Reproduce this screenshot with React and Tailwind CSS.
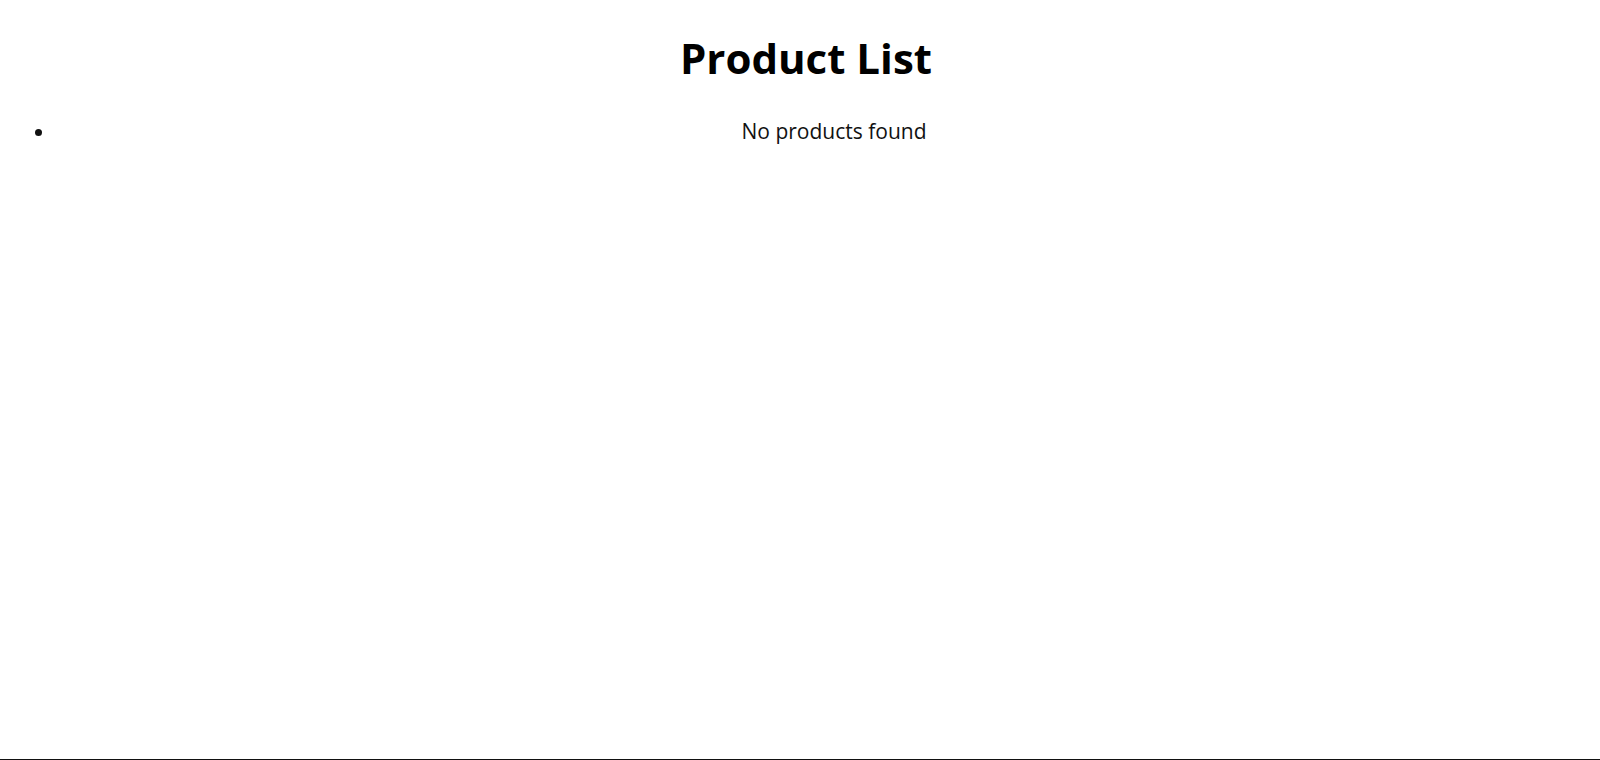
export default function App() {
  const products = [];

  return (
    <div className="min-h-[760px] border-b border-[#111] bg-white font-['Segoe_UI','Open_Sans',sans-serif] text-black">
      <h1 className="pt-[30px] pl-[12px] text-center text-[42px] font-bold leading-[56px]">Product List</h1>
      <ul className="mt-[31px] list-disc pl-[56px]">
        {products.length === 0 && (
          <li className="pl-[12px] text-center text-[21px] leading-[28px] text-[#111]">No products found</li>
        )}
      </ul>
    </div>
  );
}
